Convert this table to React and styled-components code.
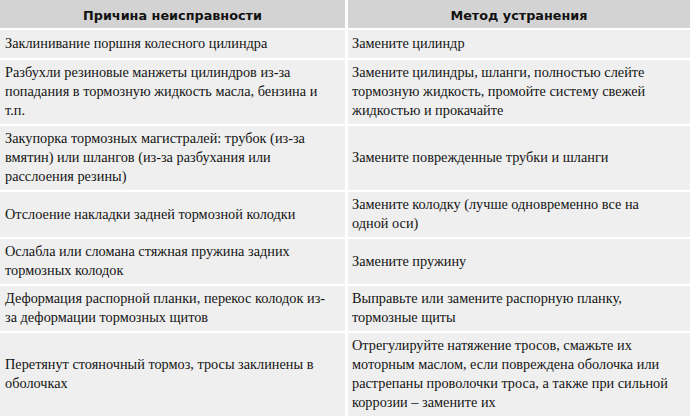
import React from "react";
import styled, { createGlobalStyle } from "styled-components";

const SERIF = '"Liberation Serif", "Times New Roman", serif';
const SANS = '"DejaVu Sans", Verdana, sans-serif';

const GlobalStyle = createGlobalStyle`
  html, body {
    margin: 0;
    padding: 0;
    background: #ffffff;
    font-family: ${SERIF};
  }
`;

const Grid = styled.div`
  display: grid;
  grid-template-columns: 345px 342px;
  column-gap: 3px;
  row-gap: 2px;
  width: 690px;
`;

const HeadCell = styled.div`
  background: #d3d3d3;
  height: 28px;
  display: flex;
  align-items: center;
  justify-content: center;
  font-family: ${SANS};
  font-weight: bold;
  font-size: 12.8px;
  color: #111;
  padding-top: 2px;
  box-sizing: border-box;
`;

const Cell = styled.div`
  background: #efefef;
  display: flex;
  align-items: center;
  box-sizing: border-box;
  min-height: 28px;
  padding: 3px ${(p) => (p.$right ? "12px" : "9px")} 4px
    ${(p) => (p.$right ? "4px" : "5px")};
`;

const Text = styled.span`
  font-family: ${SERIF};
  font-size: 14.3px;
  line-height: 19px;
  color: #141414;
`;

const rows = [
  ["Заклинивание поршня колесного цилиндра", "Замените цилиндр"],
  [
    "Разбухли резиновые манжеты цилиндров из-за попадания в тормозную жидкость масла, бензина и т.п.",
    "Замените цилиндры, шланги, полностью слейте тормозную жидкость, промойте систему свежей жидкостью и прокачайте",
  ],
  [
    "Закупорка тормозных магистралей: трубок (из-за вмятин) или шлангов (из-за разбухания или расслоения резины)",
    "Замените поврежденные трубки и шланги",
  ],
  [
    "Отслоение накладки задней тормозной колодки",
    "Замените колодку (лучше одновременно все на одной оси)",
  ],
  ["Ослабла или сломана стяжная пружина задних тормозных колодок", "Замените пружину"],
  [
    "Деформация распорной планки, перекос колодок из-за деформации тормозных щитов",
    "Выправьте или замените распорную планку, тормозные щиты",
  ],
  [
    "Перетянут стояночный тормоз, тросы заклинены в оболочках",
    "Отрегулируйте натяжение тросов, смажьте их моторным маслом, если повреждена оболочка или растрепаны проволочки троса, а также при сильной коррозии – замените их",
  ],
];

export default function App() {
  return (
    <>
      <GlobalStyle />
      <Grid>
        <HeadCell>Причина неисправности</HeadCell>
        <HeadCell>Метод устранения</HeadCell>
        {rows.map(([cause, fix], i) => (
          <React.Fragment key={i}>
            <Cell>
              <Text>{cause}</Text>
            </Cell>
            <Cell $right>
              <Text>{fix}</Text>
            </Cell>
          </React.Fragment>
        ))}
      </Grid>
    </>
  );
}
